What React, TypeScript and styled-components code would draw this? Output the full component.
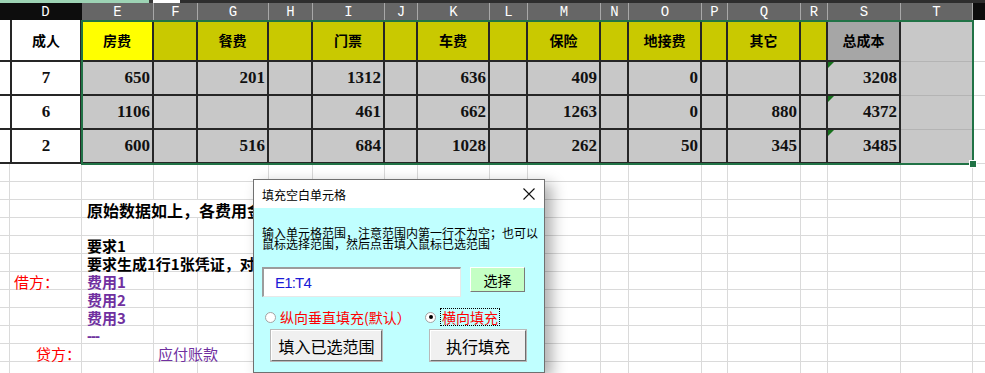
import React from 'react'
import styled, { createGlobalStyle } from 'styled-components'

const GlobalStyle = createGlobalStyle`
  html, body {
    margin: 0;
    padding: 0;
    background: #ffffff;
    overflow: hidden;
  }
  body {
    font-family: "Noto Sans CJK SC", sans-serif;
  }
`

// column widths: row header, D..T, right edge
const COLS = [10, 72, 72, 44, 71, 44, 72, 33, 72, 38, 73, 28, 73, 26, 73, 27, 73, 72, 12]
const LETTERS = ['', 'D', 'E', 'F', 'G', 'H', 'I', 'J', 'K', 'L', 'M', 'N', 'O', 'P', 'Q', 'R', 'S', 'T', '']
const COL_INDEX: Record<string, number> = {}
LETTERS.forEach((l, i) => { if (l) COL_INDEX[l] = i })

type Line = 'grid' | 'dark' | 'soft' | 'none'
const rule = (l: Line) =>
  l === 'dark' ? '2px solid #262626'
  : l === 'soft' ? '1px solid #b4b4b4'
  : l === 'grid' ? '1px solid #dadada'
  : 'none'

const Page = styled.div`
  position: relative;
  width: 985px;
  height: 373px;
  overflow: hidden;
  background: #fff;
`

const TopStrip = styled.div`
  display: flex;
  height: 3px;
  background: #2e2e2e;
`

const StripPart = styled.div<{ $w: number; $bg: string }>`
  width: ${p => p.$w}px;
  background: ${p => p.$bg};
`

const Sheet = styled.div`
  display: grid;
  grid-template-columns: ${COLS.map(c => c + 'px').join(' ')};
  grid-template-rows: 17px 42px 34px 34px 34px repeat(12, 18px);
`

const ColHead = styled.div<{ $dark?: boolean; $col: number }>`
  grid-row: 1;
  grid-column: ${p => p.$col + 1};
  box-sizing: border-box;
  background: ${p => (p.$dark ? '#0d0d0d' : '#666666')};
  border-right: 1px solid ${p => (p.$dark ? '#0d0d0d' : '#a8a8a8')};
  color: #ffffff;
  font-family: "Liberation Mono", monospace;
  font-size: 14px;
  display: flex;
  align-items: center;
  justify-content: center;
`

const Cell = styled.div<{
  $row: number
  $col: number
  $bg?: string
  $right?: Line
  $bottom?: Line
  $left?: Line
  $justify?: string
  $padL?: number
  $padR?: number
  $span?: number
  $flag?: boolean
}>`
  position: relative;
  box-sizing: border-box;
  min-width: 0;
  grid-row: ${p => p.$row};
  grid-column: ${p => p.$col + 1} / span ${p => p.$span ?? 1};
  display: flex;
  align-items: center;
  justify-content: ${p => p.$justify ?? 'flex-start'};
  padding: 0 ${p => p.$padR ?? 2}px 0 ${p => p.$padL ?? 2}px;
  background: ${p => p.$bg ?? 'transparent'};
  border-right: ${p => rule(p.$right ?? 'grid')};
  border-bottom: ${p => rule(p.$bottom ?? 'grid')};
  border-left: ${p => rule(p.$left ?? 'none')};
  white-space: nowrap;

  &::before {
    content: '';
    display: ${p => (p.$flag ? 'block' : 'none')};
    position: absolute;
    left: 0;
    top: 0;
    border-top: 6px solid #16701c;
    border-right: 6px solid transparent;
  }
`

const HeadLabel = styled.span`
  font-family: "Noto Sans CJK SC", sans-serif;
  font-weight: 700;
  font-size: 14px;
  color: #000;
`

const Num = styled.span`
  font-family: "Liberation Serif", serif;
  font-weight: 700;
  font-size: 17px;
  color: #111;
`

const TONES = { black: '#000000', purple: '#7030a0', red: '#ff0000' }

const Note = styled.span<{ $tone: keyof typeof TONES; $bold?: boolean; $size?: number }>`
  font-family: "Noto Sans CJK SC", sans-serif;
  font-weight: ${p => (p.$bold ? 700 : 400)};
  font-size: ${p => p.$size ?? 15}px;
  line-height: 18px;
  color: ${p => TONES[p.$tone]};
  padding-top: 2px;
`

const Dashes = styled(Note)`
  font-family: "Liberation Sans", sans-serif;
  font-weight: 700;
  letter-spacing: -1px;
`

const Selection = styled.div`
  grid-column: 3 / 19;
  grid-row: 2 / 6;
  margin: 0 -1px -1px -1px;
  border: 2px solid #217346;
  position: relative;
  pointer-events: none;
`

const FillHandle = styled.div`
  position: absolute;
  right: -5px;
  bottom: -5px;
  width: 6px;
  height: 6px;
  background: #217346;
  border: 1px solid #ffffff;
`

/* dialog */

const Dialog = styled.div`
  position: absolute;
  left: 253px;
  top: 179px;
  width: 292px;
  height: 194px;
  box-sizing: border-box;
  border: 1px solid #707070;
  background: #c0ffff;
  box-shadow: 7px 5px 14px rgba(0, 0, 0, 0.32);
  display: flex;
  flex-direction: column;
  font-family: "Noto Sans CJK SC", sans-serif;
`

const TitleBar = styled.div`
  height: 28px;
  background: #ffffff;
  display: flex;
  align-items: center;
  justify-content: space-between;
  padding: 0 9px 0 8px;
`

const Title = styled.span`
  font-size: 12px;
  color: #000;
`

const Body = styled.div`
  flex: 1;
  padding: 19px 0 0 8px;
  display: flex;
  flex-direction: column;
`

const Hint = styled.p`
  margin: 0;
  font-size: 12px;
  line-height: 11px;
  color: #000;
  white-space: nowrap;
`

const InputRow = styled.div`
  display: flex;
  align-items: flex-start;
  margin-top: 18px;
`

const RangeInput = styled.input`
  box-sizing: border-box;
  width: 199px;
  height: 30px;
  margin: 0;
  padding: 0 0 0 11px;
  background: #ffffff;
  border-style: solid;
  border-width: 2px 1px 1px 2px;
  border-color: #9c9c9c #e8e8e8 #e8e8e8 #9c9c9c;
  font-family: "Liberation Sans", sans-serif;
  font-size: 15px;
  letter-spacing: -0.8px;
  color: #1a1ad6;
  outline: none;
`

const PickButton = styled.button`
  box-sizing: border-box;
  width: 55px;
  height: 25px;
  margin: 0 0 0 9px;
  padding: 0;
  background: #c4ffc4;
  border: 1px solid;
  border-color: #ffffff #7a7a7a #7a7a7a #ffffff;
  font-family: "Noto Sans CJK SC", sans-serif;
  font-size: 14px;
  color: #000;
`

const RadioRow = styled.div`
  display: flex;
  align-items: center;
  height: 18px;
  margin-top: 11px;
`

const RadioItem = styled.label<{ $w?: number }>`
  display: flex;
  align-items: center;
  width: ${p => (p.$w ? p.$w + 'px' : 'auto')};
  color: #ff0000;
  font-size: 14px;
  white-space: nowrap;
`

const RadioDot = styled.span<{ $on?: boolean }>`
  position: relative;
  box-sizing: border-box;
  width: 11px;
  height: 11px;
  margin: 0 4px 0 3px;
  border-radius: 50%;
  background: #ffffff;
  border: 1px solid #a3a3a3;

  &::after {
    content: '';
    display: ${p => (p.$on ? 'block' : 'none')};
    position: absolute;
    left: 2.5px;
    top: 2.5px;
    width: 4px;
    height: 4px;
    border-radius: 50%;
    background: #000;
  }
`

const Focused = styled.span`
  border: 1px dotted #000;
  padding: 0 1px;
  line-height: 16px;
`

const ButtonRow = styled.div`
  display: flex;
  margin-top: 4px;
`

const ActionButton = styled.button<{ $w: number; $gap: number }>`
  box-sizing: border-box;
  width: ${p => p.$w}px;
  height: 31px;
  margin: 0 0 0 ${p => p.$gap}px;
  padding: 0;
  background: #f0f0f0;
  border: 1px solid;
  border-color: #ffffff #6e6e6e #6e6e6e #ffffff;
  box-shadow: 0 0 0 1px #b9b9b9;
  font-family: "Noto Sans CJK SC", sans-serif;
  font-size: 16px;
  color: #000;
`

const CloseIcon = () => (
  <svg width="12" height="12" viewBox="0 0 12 12">
    <path d="M0.5 0.5 L11.5 11.5 M11.5 0.5 L0.5 11.5" stroke="#111" strokeWidth="1.1" />
  </svg>
)

const HEADERS: Record<string, string> = {
  E: '房费', G: '餐费', I: '门票', K: '车费', M: '保险', O: '地接费', Q: '其它', S: '总成本',
}

const DATA: { who: string; vals: Record<string, string> }[] = [
  { who: '7', vals: { E: '650', G: '201', I: '1312', K: '636', M: '409', O: '0', S: '3208' } },
  { who: '6', vals: { E: '1106', I: '461', K: '662', M: '1263', O: '0', Q: '880', S: '4372' } },
  { who: '2', vals: { E: '600', G: '516', I: '684', K: '1028', M: '262', O: '50', Q: '345', S: '3485' } },
]

type Spec = { col: string; span?: number; padL?: number; node: React.ReactNode }

const NOTES: Spec[][] = [
  [],
  [],
  [{ col: 'E', span: 9, padL: 5, node: <Note $tone="black" $bold $size={16}>原始数据如上，各费用金额汇总如下</Note> }],
  [],
  [{ col: 'E', padL: 5, node: <Note $tone="black" $bold>要求1</Note> }],
  [{ col: 'E', span: 9, padL: 5, node: <Note $tone="black" $bold>要求生成1行1张凭证，对应各费用科目</Note> }],
  [
    { col: 'D', padL: 4, node: <Note $tone="red">借方：</Note> },
    { col: 'E', padL: 5, node: <Note $tone="purple" $bold>费用1</Note> },
  ],
  [{ col: 'E', padL: 5, node: <Note $tone="purple" $bold>费用2</Note> }],
  [{ col: 'E', padL: 5, node: <Note $tone="purple" $bold>费用3</Note> }],
  [{ col: 'E', padL: 5, node: <Dashes $tone="purple">---</Dashes> }],
  [
    { col: 'D', padL: 26, node: <Note $tone="red">贷方：</Note> },
    { col: 'F', span: 2, padL: 4, node: <Note $tone="purple">应付账款</Note> },
  ],
  [],
]

function tableRow(r: number) {
  const row = r + 2
  const cells: React.ReactNode[] = []
  const isHead = r === 0
  cells.push(<Cell key={`t${r}-0`} $row={row} $col={0} $bg="#fff" $right="none" $bottom="dark" />)
  cells.push(
    <Cell key={`t${r}-1`} $row={row} $col={1} $bg="#fff" $left="dark" $right="dark" $bottom="dark" $justify="center">
      {isHead ? <HeadLabel>成人</HeadLabel> : <Num>{DATA[r - 1].who}</Num>}
    </Cell>
  )
  for (let c = 2; c <= 16; c++) {
    const letter = LETTERS[c]
    let bg = '#c8c8c8'
    if (isHead) bg = letter === 'E' ? '#ffff00' : letter === 'S' ? '#a6a6a6' : '#c9c900'
    const text = isHead ? HEADERS[letter] : DATA[r - 1].vals[letter]
    cells.push(
      <Cell
        key={`t${r}-${c}`}
        $row={row}
        $col={c}
        $bg={bg}
        $right="dark"
        $bottom="dark"
        $justify={isHead ? 'center' : 'flex-end'}
        $flag={!isHead && letter === 'S'}
      >
        {text && (isHead ? <HeadLabel>{text}</HeadLabel> : <Num>{text}</Num>)}
      </Cell>
    )
  }
  cells.push(<Cell key={`t${r}-17`} $row={row} $col={17} $bg="#c8c8c8" $right="none" $bottom="soft" />)
  cells.push(<Cell key={`t${r}-18`} $row={row} $col={18} $right="none" />)
  return cells
}

function noteRow(specs: Spec[], r: number) {
  const row = r + 6
  const cells: React.ReactNode[] = []
  let c = 0
  while (c < COLS.length) {
    const spec = specs.find(s => COL_INDEX[s.col] === c)
    const span = spec?.span ?? 1
    cells.push(
      <Cell
        key={`n${r}-${c}`}
        $row={row}
        $col={c}
        $span={span}
        $padL={spec?.padL}
        $right={c === COLS.length - 1 ? 'none' : 'grid'}
      >
        {spec?.node}
      </Cell>
    )
    c += span
  }
  return cells
}

export default function App() {
  return (
    <Page>
      <GlobalStyle />
      <TopStrip>
        <StripPart $w={149} $bg="#9dd3b4" />
        <StripPart $w={4} $bg="#3a3a3a" />
        <StripPart $w={27} $bg="#ffffff" />
      </TopStrip>
      <Sheet>
        {LETTERS.map((l, i) => (
          <ColHead key={'h' + i} $col={i} $dark={i <= 1 || i === LETTERS.length - 1}>{l}</ColHead>
        ))}
        {[0, 1, 2, 3].map(r => tableRow(r))}
        {NOTES.map((specs, r) => noteRow(specs, r))}
        <Selection>
          <FillHandle />
        </Selection>
      </Sheet>

      <Dialog>
        <TitleBar>
          <Title>填充空白单元格</Title>
          <CloseIcon />
        </TitleBar>
        <Body>
          <Hint>
            输入单元格范围，注意范围内第一行不为空；也可以
            <br />
            鼠标选择范围，然后点击填入鼠标已选范围
          </Hint>
          <InputRow>
            <RangeInput readOnly value="E1:T4" />
            <PickButton>选择</PickButton>
          </InputRow>
          <RadioRow>
            <RadioItem $w={160}>
              <RadioDot />
              纵向垂直填充(默认）
            </RadioItem>
            <RadioItem>
              <RadioDot $on />
              <Focused>横向填充</Focused>
            </RadioItem>
          </RadioRow>
          <ButtonRow>
            <ActionButton $w={111} $gap={9}>填入已选范围</ActionButton>
            <ActionButton $w={96} $gap={48}>执行填充</ActionButton>
          </ButtonRow>
        </Body>
      </Dialog>
    </Page>
  )
}
